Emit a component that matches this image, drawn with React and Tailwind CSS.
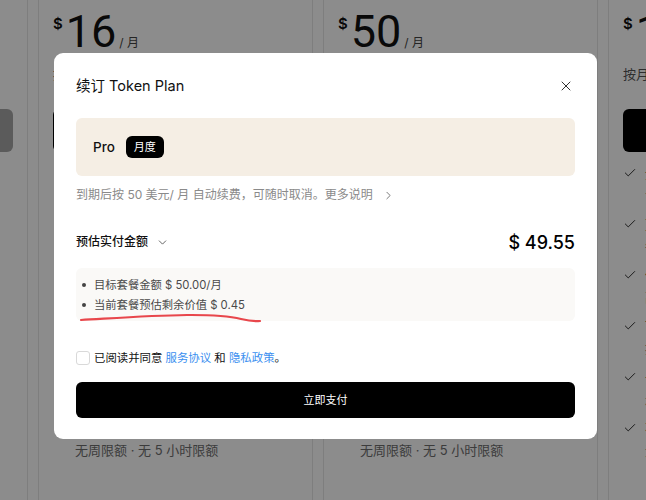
import { X, ChevronDown, ChevronRight, Check } from 'lucide-react';

const font = { fontFamily: 'Inter, "Noto Sans CJK SC", sans-serif' };

const features = [
  ['全部模型可用', '含最新旗舰模型'],
  ['更高的请求额度', '每日自动重置'],
  ['优先排队', '高峰期更快响应'],
  ['Token 用量统计', '按日查看明细'],
  ['长上下文支持', '最高 200K'],
  ['不限对话次数', '无周限额 · 无 5 小时限额'],
];

// pricing cards sitting behind the dialog
const cards = [
  { price: '4', sub: '按月订阅', btn: 'bg-[#a6a6a6]' },
  { price: '16', sub: '按月订阅，可随时取消', btn: 'bg-black' },
  { price: '50', sub: '按月订阅，可随时取消', btn: 'bg-black' },
  { price: '100', sub: '按月订阅，可随时取消', btn: 'bg-black' },
];

function PriceCard({ card }) {
  return (
    <div className="w-[275px] shrink-0 h-[560px] -mt-[20px] border border-[#e6e6e6] bg-white px-[14px] pt-[28px]">
      <div className="flex items-baseline text-[#111]">
        <span className="self-start text-[15px] font-semibold leading-none mt-[7px]">$</span>
        <span className="text-[45px] leading-none ml-[3px]" style={{ fontFamily: 'Roboto, sans-serif' }}>
          {card.price}
        </span>
        <span className="text-[12px] text-[#444] ml-[3px]">/ 月</span>
      </div>
      <p className="mt-[10px] text-[13px] leading-[20px] text-[#555]">{card.sub}</p>
      <div className={`mt-[25px] h-[43px] rounded-[6px] ${card.btn}`} />
      <ul className="mt-[10px] flex flex-col">
        {features.map(([a, b], i) => (
          <li key={i} className="flex gap-[8px] h-[51px]">
            <Check size={14} strokeWidth={1.6} className="mt-[4px] text-[#222] shrink-0" />
            <div className="flex flex-col">
              <span className="text-[13px] text-[#222] leading-[22px]">{a}</span>
              <span className="text-[13px] text-[#6e6e6e] leading-[22px]">{b}</span>
            </div>
          </li>
        ))}
      </ul>
    </div>
  );
}

export default function App() {
  return (
    <div className="relative w-[646px] h-[500px] overflow-hidden bg-white" style={font}>
      <div className="flex gap-[10px] -ml-[247px]">
        {cards.map((c, i) => (
          <PriceCard key={i} card={c} />
        ))}
      </div>

      <div className="absolute inset-0 bg-black/45" />

      <div className="absolute left-[54px] top-[53px] w-[543px] rounded-[9px] bg-white px-[22px] pt-[22px] pb-[21px]">
        <div className="flex items-center justify-between h-[22px]">
          <h2 className="text-[14.5px] text-[#111]">续订 Token Plan</h2>
          <X size={16} strokeWidth={1.4} className="text-[#222] mr-[1px]" />
        </div>

        <div className="mt-[21px] h-[58px] rounded-[6px] bg-[#f5eee4] flex items-center gap-[11px] px-[17px]">
          <span className="text-[13.5px] font-medium text-[#111]">Pro</span>
          <span className="h-[22px] px-[8px] rounded-[6px] bg-black text-white text-[11px] flex items-center">月度</span>
        </div>

        <p className="mt-[9px] flex items-center text-[12px] text-[#8a8a8a] leading-[20px]">
          到期后按 50 美元/ 月 自动续费，可随时取消。更多说明
          <ChevronRight size={13} strokeWidth={1.6} className="ml-[9px] text-[#666]" />
        </p>

        <div className="mt-[24px] flex items-center justify-between h-[26px]">
          <div className="flex items-center gap-[8px]">
            <span className="text-[12px] font-medium text-[#111]">预估实付金额</span>
            <ChevronDown size={13} strokeWidth={1.5} className="text-[#444]" />
          </div>
          <span className="text-[18px] font-medium text-black">$ 49.55</span>
        </div>

        <div className="relative mt-[13px] rounded-[6px] bg-[#faf9f7] px-[6px] pt-[7px] pb-[6px]">
          <ul className="text-[11.3px] text-[#4a4a4a] leading-[20px]">
            <li className="flex items-center gap-[8px]">
              <span className="w-[4px] h-[4px] rounded-full bg-[#444]" />
              目标套餐金额 $ 50.00/月
            </li>
            <li className="flex items-center gap-[8px]">
              <span className="w-[4px] h-[4px] rounded-full bg-[#444]" />
              当前套餐预估剩余价值 $ 0.45
            </li>
          </ul>
          {/* hand-drawn red marker stroke */}
          <svg className="absolute left-[3px] top-[43px]" width="184" height="14" viewBox="0 0 184 14" fill="none">
            <path
              d="M2 9 C 30 7.5, 70 4.5, 108 4 C 135 3.8, 150 5, 162 8 C 170 10, 176 10.5, 181 10"
              stroke="#e8474c"
              strokeWidth="2.2"
              strokeLinecap="round"
            />
          </svg>
        </div>

        <label className="mt-[29px] flex items-center gap-[4px] text-[11.4px] text-[#111] leading-[16px]">
          <span className="w-[14px] h-[14px] rounded-[3px] border border-[#d9d9d9] bg-white" />
          <span>
            已阅读并同意 <span className="text-[#3b8ff0]">服务协议</span> 和{' '}
            <span className="text-[#3b8ff0]">隐私政策</span>。
          </span>
        </label>

        <button className="mt-[16px] w-full h-[36px] rounded-[6px] bg-black text-white text-[11px]">
          立即支付
        </button>
      </div>
    </div>
  );
}
